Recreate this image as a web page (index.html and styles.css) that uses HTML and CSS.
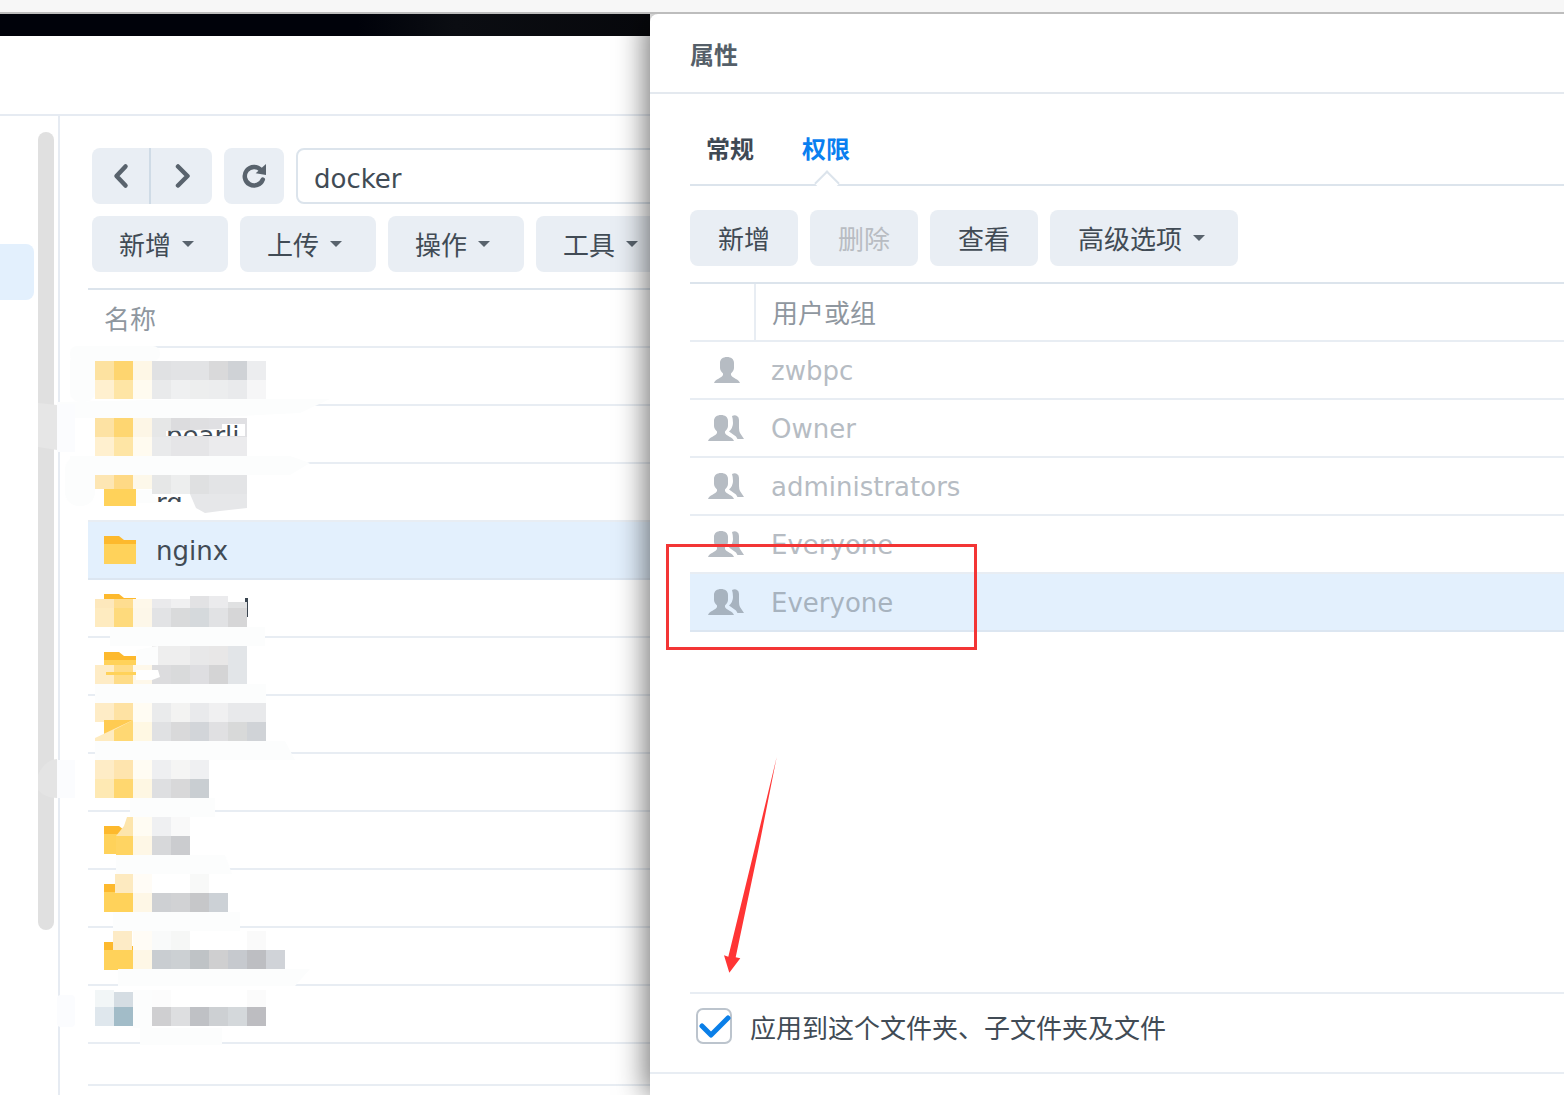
FILE: index.html
```html
<!DOCTYPE html>
<html lang="zh-CN">
<head>
<meta charset="utf-8">
<title>属性</title>
<link rel="stylesheet" href="styles.css">
</head>
<body>
<svg class="defs" width="0" height="0" aria-hidden="true">
  <symbol id="folder" viewBox="0 0 32 28">
    <path d="M0 0H15L20 4H32V8H0Z" fill="#fdb92d"/>
    <rect y="8" width="32" height="20" fill="#ffd25a"/>
  </symbol>
  <symbol id="user" viewBox="0 0 26 26">
    <path d="M13 0C9 0 6 2 6 6V11C6 13 7.5 15 9 16.5V18C8 21 1 22 0 26H26C25 22 18 21 17 18V16.5C18.5 15 20 13 20 11V6C20 2 17 0 13 0Z"/>
  </symbol>
  <symbol id="group" viewBox="0 0 36 26">
    <path d="M13 0C9 0 6 2 6 6V11C6 13 7.5 15 9 16.5V18C8 21 1 22 0 26H26C25 22 18 21 17 18V16.5C18.5 15 20 13 20 11V6C20 2 17 0 13 0Z"/>
    <path d="M24 1Q27-.5 29 1 31 2 31 5V13Q31 16 32 18L36 24H29.5L28 21.5 21 16.5Q25 13 25 8 25 4 24 1Z"/>
  </symbol>
  <rect id="c" width="19" height="19"/>
</svg>

<div class="topstrip"></div>
<div class="stage">
  <section class="filepane">
    <div class="blackbar"></div>
    <div class="appbar"></div>
    <div class="panebody">
      <aside class="sidebar">
        <div class="scroll"></div>
        <div class="sideitem"></div>
      </aside>
      <main class="browser">
        <div class="toolrow">
          <div class="navgroup">
            <button class="navbtn navbtn-first" aria-label="后退"><svg width="16" height="28" viewBox="0 0 16 28"><path class="glyph" d="M12.5 4.5 3.5 14l9 9.5"/></svg></button>
            <button class="navbtn" aria-label="前进"><svg width="16" height="28" viewBox="0 0 16 28"><path class="glyph" d="M4 4.5 13.5 14 4 23.5"/></svg></button>
          </div>
          <button class="refresh" aria-label="刷新"><svg width="26" height="28" viewBox="0 0 26 28"><path class="glyph" d="M20 8A9.3 9.3 0 1 0 21.8 17.5"/><path class="glyphfill" d="M25 2V13L14.7 11.3Z"/></svg></button>
          <div class="pathbox">docker</div>
        </div>
        <div class="toolrow actionrow">
          <button class="btn btn-file">新增<i class="caret"></i></button>
          <button class="btn btn-file">上传<i class="caret"></i></button>
          <button class="btn btn-file">操作<i class="caret"></i></button>
          <button class="btn btn-file">工具<i class="caret"></i></button>
        </div>
        <div class="filetable">
          <div class="filehead">名称</div>
          <div class="filerow"><svg class="folder"><use href="#folder"/></svg></div>
          <div class="filerow"><svg class="folder"><use href="#folder"/></svg></div>
          <div class="filerow"><svg class="folder"><use href="#folder"/></svg></div>
          <div class="filerow filerow-on"><svg class="folder"><use href="#folder"/></svg><span class="filename">nginx</span></div>
          <div class="filerow"><svg class="folder"><use href="#folder"/></svg></div>
          <div class="filerow"><svg class="folder"><use href="#folder"/></svg></div>
          <div class="filerow"><svg class="folder"><use href="#folder"/></svg></div>
          <div class="filerow"><svg class="folder"><use href="#folder"/></svg></div>
          <div class="filerow"><svg class="folder"><use href="#folder"/></svg></div>
          <div class="filerow"><svg class="folder"><use href="#folder"/></svg></div>
          <div class="filerow"><svg class="folder"><use href="#folder"/></svg></div>
          <div class="filerow"></div>
          <div class="filefoot"></div>
        </div>
      </main>
    </div>
  </section>

  <section class="drawer">
    <h1 class="drawertitle">属性</h1>
    <div class="drawerbody">
      <div class="tabs">
        <span class="tab">常规</span>
        <span class="tab tab-on">权限</span>
      </div>
      <div class="permbtns">
        <button class="btn btn-w">新增</button>
        <button class="btn btn-w btn-off">删除</button>
        <button class="btn btn-w">查看</button>
        <button class="btn btn-adv">高级选项<i class="caret"></i></button>
      </div>
      <div class="permtable">
        <div class="permhead"><span class="permhead-ico"></span><span class="permhead-txt">用户或组</span></div>
        <div class="permrow"><span class="permico"><svg class="ico-user"><use href="#user"/></svg></span><span class="permname">zwbpc</span></div>
        <div class="permrow"><span class="permico"><svg class="ico-group"><use href="#group"/></svg></span><span class="permname">Owner</span></div>
        <div class="permrow"><span class="permico"><svg class="ico-group"><use href="#group"/></svg></span><span class="permname">administrators</span></div>
        <div class="permrow"><span class="permico"><svg class="ico-group"><use href="#group"/></svg></span><span class="permname">Everyone</span></div>
        <div class="permrow permrow-on"><span class="permico"><svg class="ico-group"><use href="#group"/></svg></span><span class="permname">Everyone</span></div>
      </div>
    </div>
    <div class="applyrow">
      <span class="check"><svg width="35" height="35" viewBox="0 0 35 35"><path d="M5 17l9 9L31 9" fill="none" stroke="#0a7fe8" stroke-width="5" stroke-linecap="round" stroke-linejoin="round"/></svg></span>
      <span>应用到这个文件夹、子文件夹及文件</span>
    </div>
    <div class="drawerfoot"></div>
  </section>
</div>

<svg class="overlay" width="1564" height="1095" viewBox="0 0 1564 1095" aria-hidden="true">
  <defs><clipPath id="cut1"><path d="M166 431 222 429V424H245V436H166Z"/></clipPath><clipPath id="cut2"><rect x="155" y="497" width="36" height="5"/></clipPath></defs>
  <!-- smears -->
  <g fill="#fcfdfd">
    <rect x="70" y="346" width="90" height="15" rx="7"/>
    <rect x="70" y="352" width="25" height="50" rx="10"/>
    <path d="M57 402 L200 399 H330 L300 413 L200 418 H57Z"/>
    <rect x="65" y="456" width="30" height="50" rx="14"/>
    <path d="M70 456H290L310 463 290 475H70Z"/>
    <rect x="110" y="627" width="155" height="19"/>
    <rect x="95" y="684" width="171" height="19"/>
    <path d="M95 741H285L295 760H95Z"/>
    <rect x="130" y="798" width="85" height="19"/>
    <path d="M116 855H225L232 874H116Z"/>
    <rect x="113" y="912" width="127" height="19"/>
    <path d="M118 969H310L295 986H118Z"/>
    <rect x="140" y="1028" width="82" height="17"/>
    <rect x="133" y="990" width="19" height="38"/>
    <rect x="57" y="995" width="18" height="32" rx="4" fill="#fbfcfe"/>
    <rect x="57" y="404" width="18" height="48" fill="#fbfcfe"/>
    <rect x="57" y="760" width="18" height="38" fill="#fbfcfe"/>
    <path d="M38 403 L57 405V450L38 447Z" fill="#e6e6e6"/>
    <path d="M38 775Q45 760 57 759V798Q45 798 38 790Z" fill="#e4e4e4"/>
  </g>
  <!-- mosaic row 1 -->
  <use href="#c" x="95" y="361" fill="#fde2a0"/><use href="#c" x="114" y="361" fill="#fed56f"/><use href="#c" x="133" y="361" fill="#fef7e6"/><use href="#c" x="152" y="361" fill="#e0e1e3"/><use href="#c" x="171" y="361" fill="#e2e3e5"/><use href="#c" x="190" y="361" fill="#e2e3e5"/><use href="#c" x="209" y="361" fill="#d9d9da"/><use href="#c" x="228" y="361" fill="#cfd2d6"/><use href="#c" x="247" y="361" fill="#ecedef"/>
  <use href="#c" x="95" y="380" fill="#fff0cf"/><use href="#c" x="114" y="380" fill="#fee5a5"/><use href="#c" x="133" y="380" fill="#fffbf0"/><use href="#c" x="152" y="380" fill="#e9eaeb"/><use href="#c" x="171" y="380" fill="#eff0f1"/><use href="#c" x="190" y="380" fill="#edeeee"/><use href="#c" x="209" y="380" fill="#ecedee"/><use href="#c" x="228" y="380" fill="#e9eaec"/><use href="#c" x="247" y="380" fill="#f6f6f7"/>
  <!-- row 2 -->
  <use href="#c" x="95" y="418" fill="#fde2a3"/><use href="#c" x="114" y="418" fill="#fed671"/><use href="#c" x="133" y="418" fill="#fdf6e6"/><use href="#c" x="152" y="418" fill="#e6e7e7"/><use href="#c" x="171" y="418" fill="#dcdcde"/><use href="#c" x="190" y="418" fill="#dfdfe1"/><use href="#c" x="209" y="418" fill="#e0e0e3"/><use href="#c" x="228" y="418" fill="#e0e0e3"/>
  <path d="M166 431 222 429V424H245V436H166Z" fill="#fff"/>
  <text x="166" y="445" class="cuttext" clip-path="url(#cut1)">pearli</text>
  <use href="#c" x="95" y="437" fill="#fff0cf"/><use href="#c" x="114" y="437" fill="#fee5a5"/><use href="#c" x="133" y="437" fill="#fffbf0"/><use href="#c" x="152" y="437" fill="#e9eaeb"/><use href="#c" x="171" y="437" fill="#e5e5e7"/><use href="#c" x="190" y="437" fill="#e5e5e7"/><use href="#c" x="209" y="437" fill="#ebebed"/><use href="#c" x="228" y="437" fill="#ebebed"/>
  <!-- row 3 -->
  <path d="M136 490H152V494L160 503H136Z" fill="#fcfdfd"/>
  <text x="156" y="512" class="cuttext" clip-path="url(#cut2)">rd</text>
  <use href="#c" x="152" y="475" fill="#e6e7e7"/><use href="#c" x="171" y="475" fill="#edeeee"/><use href="#c" x="190" y="475" fill="#dfe0e1"/><use href="#c" x="209" y="475" fill="#e3e4e6"/><use href="#c" x="228" y="475" fill="#e3e4e6"/>
  <path d="M190 494H247V508L220 511 205 513 196 508Z" fill="#e6e7e9"/>
  <path d="M95 475H114V489H95Z" fill="#fde6b3"/><path d="M114 475H133V489H114Z" fill="#fed985"/><path d="M133 475H152V489H133Z" fill="#fdf8ea"/>
  <!-- row 5 -->
  <rect x="245" y="598" width="3" height="19" fill="#3a4550"/>
  <use href="#c" x="95" y="599" fill="#fde8bc"/><use href="#c" x="114" y="599" fill="#fedd90"/><use href="#c" x="133" y="599" fill="#fef8ea"/><use href="#c" x="152" y="599" fill="#eaeaec"/><use href="#c" x="171" y="599" fill="#f0f0f1"/><use href="#c" x="190" y="596" fill="#e2e2e4"/><use href="#c" x="209" y="596" fill="#ebebed"/><use href="#c" x="228" y="602" fill="#e0e1e2"/>
  <use href="#c" x="95" y="608" fill="#feebc0"/><use href="#c" x="114" y="608" fill="#feda7c"/><use href="#c" x="133" y="608" fill="#fdf7e9"/><use href="#c" x="152" y="608" fill="#e2e3e5"/><use href="#c" x="171" y="608" fill="#d9dadb"/><use href="#c" x="190" y="608" fill="#d5d9dc"/><use href="#c" x="209" y="608" fill="#e1e2e4"/><use href="#c" x="228" y="608" fill="#d6d6d7"/>
  <!-- row 6 -->
  <use href="#c" x="152" y="646" fill="#eeeeee"/><use href="#c" x="171" y="646" fill="#eeeeee"/><use href="#c" x="190" y="646" fill="#e8e8e9"/><use href="#c" x="209" y="646" fill="#e8e7e7"/><use href="#c" x="228" y="646" fill="#e2e5e8"/>
  <path d="M136 650 L158 646V665L136 668Z" fill="#fcfdfd"/>
  <use href="#c" x="95" y="665" fill="#feecc6"/><use href="#c" x="114" y="665" fill="#fedc88"/><use href="#c" x="133" y="665" fill="#fef8ea"/><use href="#c" x="152" y="665" fill="#dcdcde"/><use href="#c" x="171" y="665" fill="#d9dadb"/><use href="#c" x="190" y="665" fill="#dedee1"/><use href="#c" x="209" y="665" fill="#d4d4d5"/><use href="#c" x="228" y="665" fill="#e2e5e8"/>
  <rect x="106" y="672" width="30" height="3" fill="#ffd25a"/><path d="M136 670H158L160 677 152 680H136Z" fill="#fff"/>
  <!-- row 7 -->
  <use href="#c" x="95" y="703" fill="#feecc6"/><use href="#c" x="114" y="703" fill="#fee2a3"/><use href="#c" x="133" y="703" fill="#fffcf3"/><use href="#c" x="152" y="703" fill="#eaebec"/><use href="#c" x="171" y="703" fill="#f3f3f2"/><use href="#c" x="190" y="703" fill="#e9eaec"/><use href="#c" x="209" y="703" fill="#f0f0f1"/><use href="#c" x="228" y="703" fill="#e8e9eb"/><use href="#c" x="247" y="703" fill="#e8e9eb"/>
  <path d="M104 720H133V730L104 734Z" fill="#ffcb52"/>
  <path d="M95 741V738L133 720V741Z" fill="#feebc0"/>
  <path d="M114 741V730L133 720V741Z" fill="#ffd873"/>
  <use href="#c" x="133" y="722" fill="#fff8e3"/><use href="#c" x="152" y="722" fill="#e0e1e3"/><use href="#c" x="171" y="722" fill="#d9d9da"/><use href="#c" x="190" y="722" fill="#d2d5d9"/><use href="#c" x="209" y="722" fill="#e0e0e2"/><use href="#c" x="228" y="722" fill="#d8d9d9"/><use href="#c" x="247" y="722" fill="#d0d3d7"/>
  <!-- row 8 -->
  <use href="#c" x="95" y="760" fill="#feecc6"/><use href="#c" x="114" y="760" fill="#fee4ae"/><use href="#c" x="133" y="760" fill="#fffcf3"/><use href="#c" x="152" y="760" fill="#eeeff1"/><use href="#c" x="171" y="760" fill="#f5f5f4"/><use href="#c" x="190" y="760" fill="#eff0f2"/>
  <use href="#c" x="95" y="779" fill="#fee9b3"/><use href="#c" x="114" y="779" fill="#ffd76f"/><use href="#c" x="133" y="779" fill="#fef7e3"/><use href="#c" x="152" y="779" fill="#dedfe1"/><use href="#c" x="171" y="779" fill="#d8d8d9"/><use href="#c" x="190" y="779" fill="#c9ced2"/>
  <!-- row 9 -->
  <path d="M127 817H133V836H116L124 826Z" fill="#fde5ac"/><use href="#c" x="133" y="817" fill="#fffcf3"/><use href="#c" x="152" y="817" fill="#eff0f2"/><use href="#c" x="171" y="817" fill="#f9f9f9"/>
  <use href="#c" x="116" y="836" fill="#ffd462"/><use href="#c" x="133" y="836" fill="#fef7e6"/><use href="#c" x="152" y="836" fill="#d7d8da"/><use href="#c" x="171" y="836" fill="#cbcccf"/>
  <!-- row 10 -->
  <use href="#c" x="115" y="874" fill="#fdeac0"/><use href="#c" x="133" y="874" fill="#fffcf6"/><use href="#c" x="190" y="874" fill="#f8f9f8"/>
  <use href="#c" x="114" y="893" fill="#ffd25a"/><use href="#c" x="133" y="893" fill="#fef7e6"/><use href="#c" x="152" y="893" fill="#ced0d3"/><use href="#c" x="171" y="893" fill="#d1d2d4"/><use href="#c" x="190" y="893" fill="#c6c7c9"/><use href="#c" x="209" y="893" fill="#ccd1d6"/>
  <!-- row 11 -->
  <use href="#c" x="113" y="931" fill="#fdebc6"/><use href="#c" x="133" y="931" fill="#fffcf6"/><use href="#c" x="152" y="931" fill="#f9fafa"/><use href="#c" x="171" y="931" fill="#f6f7f6"/><use href="#c" x="247" y="931" fill="#fafafa"/>
  <use href="#c" x="114" y="950" fill="#ffd25a"/><use href="#c" x="133" y="950" fill="#fef7e6"/><use href="#c" x="152" y="950" fill="#c9cdd1"/><use href="#c" x="171" y="950" fill="#ccd0d3"/><use href="#c" x="190" y="950" fill="#bfc3c6"/><use href="#c" x="209" y="950" fill="#cfcfd0"/><use href="#c" x="228" y="950" fill="#c6c9ce"/><use href="#c" x="247" y="950" fill="#bdbec2"/><use href="#c" x="266" y="950" fill="#d0d3d8"/>
  <!-- row 12 -->
  <use href="#c" x="95" y="990" fill="#f2f6f7"/><use href="#c" x="114" y="992" fill="#d5dde3"/><use href="#c" x="152" y="990" fill="#fcfcfc"/><use href="#c" x="247" y="990" fill="#fbfbfb"/>
  <use href="#c" x="95" y="1007" fill="#dfe7ed"/><use href="#c" x="114" y="1007" fill="#a2bcc8"/><use href="#c" x="152" y="1007" fill="#cfcfd1"/><use href="#c" x="171" y="1007" fill="#dddee0"/><use href="#c" x="190" y="1007" fill="#bfc1c5"/><use href="#c" x="209" y="1007" fill="#cdd0d3"/><use href="#c" x="228" y="1007" fill="#d4d8db"/><use href="#c" x="247" y="1007" fill="#bdbdc1"/>
  <!-- annotations -->
  <rect x="667.5" y="545.5" width="308" height="103" fill="none" stroke="#f33535" stroke-width="3"/>
  <path d="M776.7 757 758.3 850 735.7 957.3 740.3 958.3 729.3 972.7 724 955.3 728.3 956.7 754.3 850Z" fill="#ff3535"/>
</svg>
</body>
</html>
```
FILE: styles.css
```css
* { box-sizing: border-box; }
html, body { margin: 0; height: 100%; }
body {
  position: relative;
  width: 1564px;
  height: 1095px;
  overflow: hidden;
  display: flex;
  flex-direction: column;
  background: #fff;
  color: #414b55;
  font-family: "DejaVu Sans", "Noto Sans CJK SC", sans-serif;
  font-size: 26px;
}
button { font: inherit; color: inherit; border: 0; padding: 0; margin: 0; }
.defs { position: absolute; }
.topstrip {
  height: 14px;
  flex: none;
  background: #f7f7f7;
  border-bottom: 2px solid #bdbdbd;
  position: relative;
  z-index: 5;
}
.stage { flex: 1; display: flex; min-height: 0; }

/* file browser */
.filepane { width: 650px; flex: none; display: flex; flex-direction: column; overflow: hidden; }
.blackbar { height: 22px; flex: none; background: linear-gradient(90deg, #00020a 0, #00020a 55%, #0b0d12 70%, #07080c 100%); }
.appbar { height: 80px; flex: none; border-bottom: 2px solid #e6ebf2; }
.panebody { flex: 1; display: flex; min-height: 0; }
.sidebar {
  width: 60px;
  flex: none;
  position: relative;
  border-right: 2px solid #e6ebf2;
  padding-top: 128px;
}
.sideitem { width: 34px; height: 56px; background: #e3f0fd; border-radius: 0 8px 8px 0; }
.scroll {
  position: absolute;
  left: 38px;
  top: 16px;
  width: 16px;
  height: 798px;
  background: #e0e0e0;
  border-radius: 8px;
}
.browser { flex: 1; min-width: 0; padding: 32px 0 0 32px; }
.toolrow { display: flex; gap: 12px; height: 56px; }
.actionrow { margin-top: 12px; }
.navgroup { display: flex; width: 120px; flex: none; }
.navbtn {
  flex: 1;
  display: flex;
  align-items: center;
  justify-content: center;
  background: #e9eef4;
  border-radius: 0 8px 8px 0;
}
.navbtn-first { flex: none; width: 59px; border-radius: 8px 0 0 8px; border-right: 2px solid #cfdbe6; }
.glyph { fill: none; stroke: #59636d; stroke-width: 4.5; stroke-linecap: round; stroke-linejoin: round; }
.glyphfill { fill: #59636d; }
.refresh {
  width: 60px;
  flex: none;
  display: flex;
  align-items: center;
  justify-content: center;
  background: #e9eef4;
  border-radius: 8px;
}
.pathbox {
  flex: none;
  width: 500px;
  padding: 6px 16px 0;
  display: flex;
  align-items: center;
  background: #fff;
  border: 2px solid #dce4ec;
  border-radius: 8px;
}
.btn {
  flex: none;
  display: inline-flex;
  align-items: center;
  height: 56px;
  padding-bottom: 2px;
  background: #e9eef4;
  border-radius: 8px;
  font-family: "Noto Sans CJK SC", sans-serif;
}
.btn-file { width: 136px; padding-left: 27px; }
.caret {
  margin: 2px 0 0 11px;
  width: 0;
  height: 0;
  border-left: 6px solid transparent;
  border-right: 6px solid transparent;
  border-top: 6px solid #59636d;
}
.filetable { margin: 16px 0 0 -4px; border-top: 2px solid #dce4ec; }
.filehead {
  height: 58px;
  padding: 0 0 2px 16px;
  display: flex;
  align-items: center;
  color: #8f979f;
  font-family: "Noto Sans CJK SC", sans-serif;
  border-bottom: 2px solid #e8edf3;
}
.filerow {
  height: 58px;
  display: flex;
  align-items: center;
  gap: 20px;
  padding-left: 16px;
  border-bottom: 2px solid #e8edf3;
}
.filename { padding-top: 2px; }
.filerow-on { background: #e3f0fd; border-bottom-color: #dce6f1; }
.folder { width: 32px; height: 28px; flex: none; }
.filefoot { height: 42px; border-bottom: 2px solid #e8edf3; }

/* properties drawer */
.drawer {
  flex: 1;
  min-width: 0;
  display: flex;
  flex-direction: column;
  background: #fff;
  border-radius: 8px 0 0 0;
  box-shadow: -4px 0 30px rgba(0, 0, 0, .55);
  position: relative;
  z-index: 2;
}
.drawertitle {
  margin: 0;
  height: 80px;
  flex: none;
  padding: 0 0 0 40px;
  display: flex;
  align-items: center;
  font-family: "Noto Sans CJK SC", sans-serif;
  font-size: 24px;
  font-weight: 700;
  color: #555f69;
  border-bottom: 2px solid #e4e9ef;
}
.drawerbody { flex: 1; padding-left: 40px; min-height: 0; }
.tabs {
  height: 92px;
  padding: 0 0 11px 16px;
  display: flex;
  align-items: flex-end;
  gap: 48px;
  border-bottom: 2px solid #dce4ec;
  font-family: "Noto Sans CJK SC", sans-serif;
  font-size: 24px;
  font-weight: 700;
  color: #3f4954;
  position: relative;
}
.tab { line-height: 36px; padding-bottom: 6px; margin-bottom: 1px; }
.tab-on { color: #0a7ff0; position: relative; }
.tab-on::after {
  content: "";
  position: absolute;
  left: 16px;
  bottom: -20px;
  width: 16px;
  height: 16px;
  background: #fff;
  border-left: 2px solid #dce4ec;
  border-top: 2px solid #dce4ec;
  transform: rotate(45deg);
}
.permbtns { display: flex; gap: 12px; margin-top: 24px; }
.btn-w { width: 108px; justify-content: center; }
.btn-off { color: #b8bcc2; }
.btn-adv { width: 188px; padding-left: 28px; }
.permtable { margin-top: 16px; border-top: 2px solid #dce4ec; }
.permhead { height: 58px; display: flex; border-bottom: 2px solid #e8edf3; font-family: "Noto Sans CJK SC", sans-serif; color: #8f979f; }
.permhead-ico { width: 66px; flex: none; border-right: 2px solid #e8edf3; }
.permhead-txt { padding: 0 0 2px 16px; align-self: center; }
.permrow {
  height: 58px;
  display: flex;
  align-items: center;
  color: #b6bcc3;
  border-bottom: 2px solid #e8edf3;
}
.permname { padding-top: 2px; }
.permico { width: 81px; flex: none; padding-left: 18px; display: flex; align-items: center; fill: #b6bcc3; }
.ico-user { width: 26px; height: 26px; margin-left: 6px; }
.ico-group { width: 36px; height: 26px; }
.permrow-on { background: #e3f0fd; color: #a7b3bf; border-bottom-color: #dce6f1; }
.permrow-on .permico { fill: #a7b3bf; }
.applyrow {
  height: 80px;
  flex: none;
  margin-left: 40px;
  padding: 0 0 14px 6px;
  display: flex;
  align-items: center;
  gap: 18px;
  border-top: 2px solid #e8edf3;
  font-family: "Noto Sans CJK SC", sans-serif;
}
.check {
  width: 36px;
  height: 36px;
  flex: none;
  border: 2px solid #bcc4cd;
  border-radius: 7px;
  background: #fff;
  display: flex;
  align-items: center;
  justify-content: center;
}
.check svg { flex: none; }
.drawerfoot { height: 23px; flex: none; border-top: 2px solid #e8edf3; }

/* annotations and redaction marks laid over the screenshot */
.overlay { position: absolute; left: 0; top: 0; z-index: 10; pointer-events: none; }
.cuttext { font-family: "DejaVu Sans", sans-serif; font-size: 26px; fill: #414b55; }
```
